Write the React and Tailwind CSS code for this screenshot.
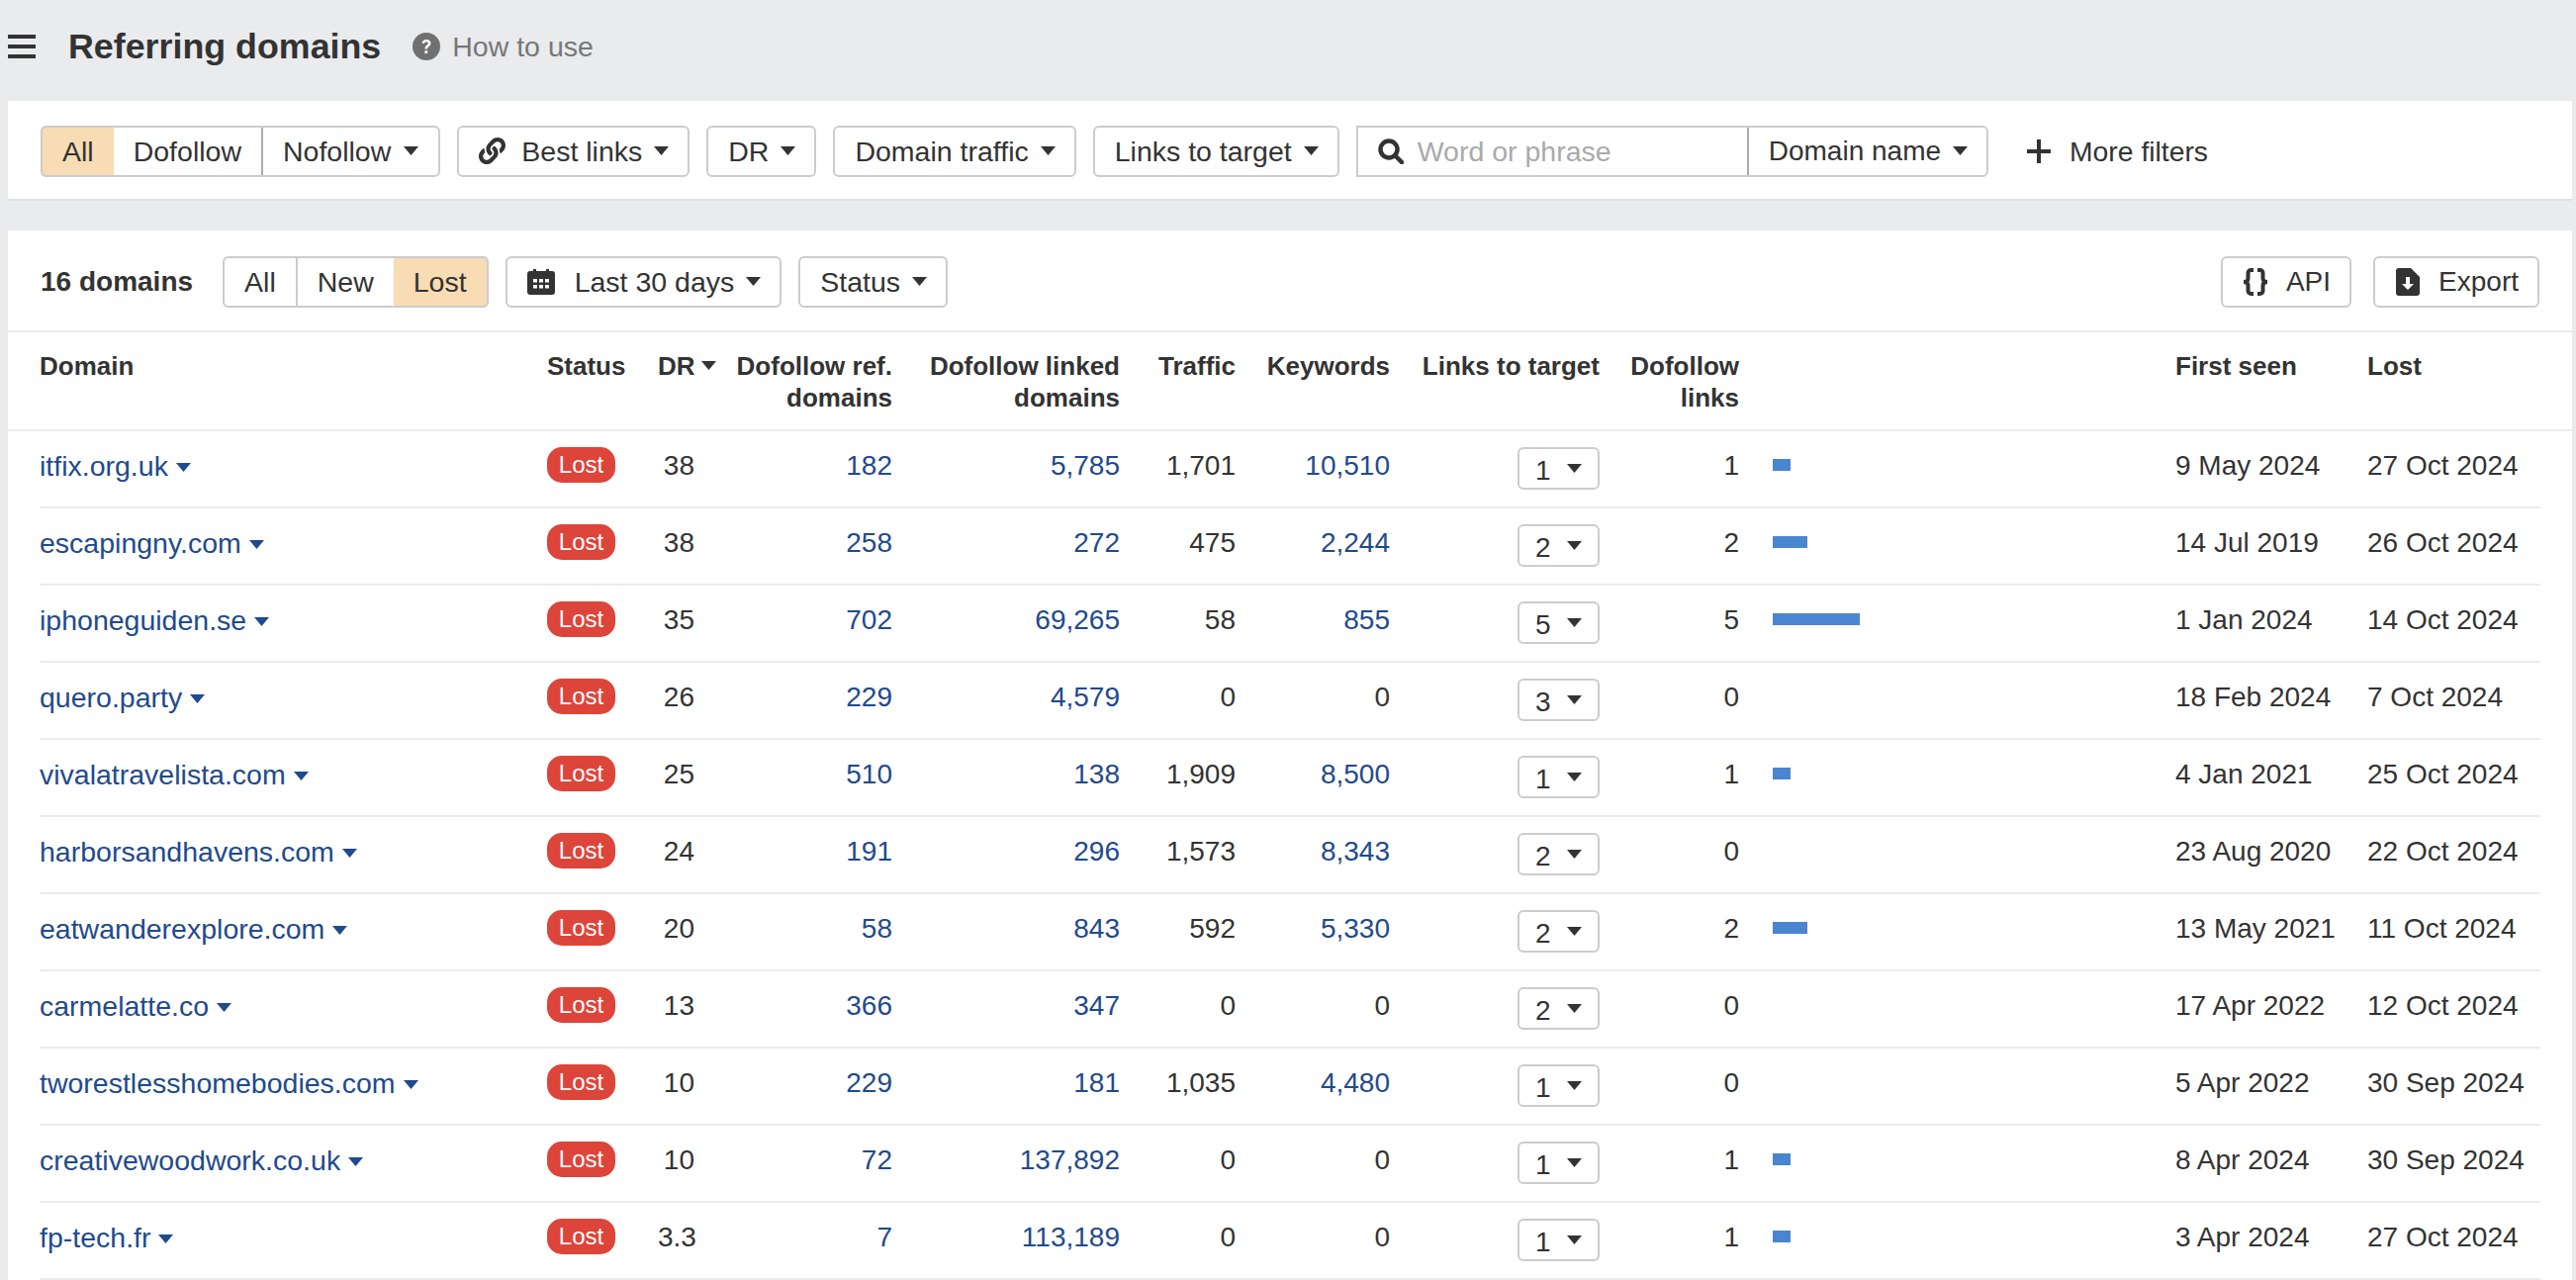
import React from "react";
import { FaLink } from "react-icons/fa";

const rows = [
  { domain: "itfix.org.uk", dr: "38", ref: "182", linked: "5,785", traffic: "1,701", keywords: "10,510", target: 1, links: 1, first: "9 May 2024", lost: "27 Oct 2024" },
  { domain: "escapingny.com", dr: "38", ref: "258", linked: "272", traffic: "475", keywords: "2,244", target: 2, links: 2, first: "14 Jul 2019", lost: "26 Oct 2024" },
  { domain: "iphoneguiden.se", dr: "35", ref: "702", linked: "69,265", traffic: "58", keywords: "855", target: 5, links: 5, first: "1 Jan 2024", lost: "14 Oct 2024" },
  { domain: "quero.party", dr: "26", ref: "229", linked: "4,579", traffic: "0", keywords: "0", target: 3, links: 0, first: "18 Feb 2024", lost: "7 Oct 2024" },
  { domain: "vivalatravelista.com", dr: "25", ref: "510", linked: "138", traffic: "1,909", keywords: "8,500", target: 1, links: 1, first: "4 Jan 2021", lost: "25 Oct 2024" },
  { domain: "harborsandhavens.com", dr: "24", ref: "191", linked: "296", traffic: "1,573", keywords: "8,343", target: 2, links: 0, first: "23 Aug 2020", lost: "22 Oct 2024" },
  { domain: "eatwanderexplore.com", dr: "20", ref: "58", linked: "843", traffic: "592", keywords: "5,330", target: 2, links: 2, first: "13 May 2021", lost: "11 Oct 2024" },
  { domain: "carmelatte.co", dr: "13", ref: "366", linked: "347", traffic: "0", keywords: "0", target: 2, links: 0, first: "17 Apr 2022", lost: "12 Oct 2024" },
  { domain: "tworestlesshomebodies.com", dr: "10", ref: "229", linked: "181", traffic: "1,035", keywords: "4,480", target: 1, links: 0, first: "5 Apr 2022", lost: "30 Sep 2024" },
  { domain: "creativewoodwork.co.uk", dr: "10", ref: "72", linked: "137,892", traffic: "0", keywords: "0", target: 1, links: 1, first: "8 Apr 2024", lost: "30 Sep 2024" },
  { domain: "fp-tech.fr", dr: "3.3", ref: "7", linked: "113,189", traffic: "0", keywords: "0", target: 1, links: 1, first: "3 Apr 2024", lost: "27 Oct 2024" },
];

const cols = "grid grid-cols-[513px_112px_65px_172px_230px_117px_156px_212px_141px_441px_194px_175px]";
const btn = "flex items-center h-[52px] border-2 border-[#ccc] rounded-md bg-white";

function Caret({ className = "text-[#333]" }) {
  return (
    <svg width="15" height="9" viewBox="0 0 15 9" className={className}>
      <path d="M0 0h15L7.5 9z" fill="currentColor" />
    </svg>
  );
}

function Menu({ children, icon, className = "" }) {
  return (
    <div className={`${btn} pl-[20px] pr-[19px] ${className}`}>
      {icon}
      <span>{children}</span>
      <Caret className="ml-[12px] text-[#333]" />
    </div>
  );
}

function Row({ row }) {
  return (
    <div className={`${cols} h-[78px] border-b-2 border-[#ebebeb] pt-[19px]`}>
      <div className="flex items-start text-[#1f4a8e]">
        <span className="text-[28.500px]">{row.domain}</span>
        <Caret className="ml-[8px] mt-[13px] text-[#1f4a8e]" />
      </div>
      <div className="-mt-[3px]">
        <span className="flex items-center justify-center w-[69px] h-[36px] rounded-[15px] bg-[#dd453a] text-white text-[24px]">Lost</span>
      </div>
      <div className="text-right pr-[28px]">{row.dr}</div>
      <div className="text-right text-[#1f4a8e]">{row.ref}</div>
      <div className="text-right text-[#1f4a8e]">{row.linked}</div>
      <div className="text-right">{row.traffic}</div>
      <div className={row.keywords === "0" ? "text-right" : "text-right text-[#1f4a8e]"}>{row.keywords}</div>
      <div className="flex justify-end -mt-[3px]">
        <div className="flex items-center w-[83px] h-[43px] border-2 border-[#ccc] rounded-md pl-[16px] pt-[4px]">
          <span>{row.target}</span>
          <Caret className="ml-[16px] -mt-[4px] text-[#333]" />
        </div>
      </div>
      <div className="text-right">{row.links}</div>
      <div className="pl-[34px] pt-[9px]">
        {row.links > 0 && <div className="h-[12px] bg-[#4a85d0]" style={{ width: row.links * 17.6 }} />}
      </div>
      <div>{row.first}</div>
      <div>{row.lost}</div>
    </div>
  );
}

export default function App() {
  return (
    <div className="h-screen overflow-hidden bg-[#e9ebed] text-[#333] text-[28px] leading-[32px] font-['Liberation_Sans',Arial,sans-serif]">
      <div className="flex items-center h-[102px] pb-[8px] pl-[8px]">
        <svg width="28" height="24" viewBox="0 0 28 24">
          <path d="M0 0h28v4H0zM0 10h28v4H0zM0 20h28v4H0z" fill="#333" />
        </svg>
        <h1 className="ml-[33px] text-[35.800px] font-bold">Referring domains</h1>
        <svg width="28" height="28" viewBox="0 0 28 28" className="ml-[32px]">
          <circle cx="14" cy="14" r="14" fill="#707070" />
          <path d="M9.6 10.6c.3-2.4 2.1-3.6 4.4-3.6 2.600 0 4.500 1.500 4.500 3.800 0 1.800-1 2.700-2.200 3.500-1 .7-1.200 1-1.200 2.100h-2.600c0-2 .5-2.800 1.800-3.700 1-.7 1.500-1.100 1.500-1.900 0-.9-.7-1.500-1.800-1.500-1.200 0-1.800.7-2 1.800zM12.400 18.300h2.800v2.700h-2.800z" fill="#fff" />
        </svg>
        <span className="ml-[12px] text-[28.500px] text-[#777]">How to use</span>
      </div>

      <div className="flex items-center gap-[17px] ml-[8px] mr-[4px] h-[101px] pt-[2px] pl-[33px] bg-white border-b-2 border-[#e0e0e0] text-[28.500px]">
        <div className={btn}>
          <div className="flex items-center h-[52px] -my-[2px] -ml-[2px] px-[20px] bg-[#f8dcb3] border-2 border-[#ccc] border-r-0 rounded-l-md">All</div>
          <div className="px-[20px] border-r-2 border-[#aaa] h-full flex items-center">Dofollow</div>
          <div className="flex items-center pl-[20px] pr-[20px]">
            Nofollow
            <Caret className="ml-[13px] text-[#333]" />
          </div>
        </div>
        <Menu className="pl-[19px]" icon={<FaLink className="mr-[16px] text-[27px] text-[#333]" />}>Best links</Menu>
        <Menu>DR</Menu>
        <Menu>Domain traffic</Menu>
        <Menu>Links to target</Menu>
        <div className={`${btn} rounded-l-none`}>
          <div className="flex items-center w-[395px] h-full pl-[20px] border-r-2 border-[#aaa]">
            <svg width="26" height="26" viewBox="0 0 26 26" className="shrink-0">
              <circle cx="11" cy="11" r="8.500" fill="none" stroke="#333" strokeWidth="4.500" />
              <path d="M17 17l7 7" stroke="#333" strokeWidth="4.500" strokeLinecap="round" />
            </svg>
            <input placeholder="Word or phrase" className="ml-[14px] w-[300px] outline-none placeholder:text-[#aaa]" />
          </div>
          <div className="flex items-center pl-[20px] pr-[19px] text-[28px]">
            Domain name
            <Caret className="ml-[12px] text-[#333]" />
          </div>
        </div>
        <div className="flex items-center ml-[22px]">
          <svg width="24" height="24" viewBox="0 0 24 24">
            <path d="M10 0h4v10h10v4H14v10h-4V14H0v-4h10z" fill="#333" />
          </svg>
          <span className="ml-[19px] text-[28.300px]">More filters</span>
        </div>
      </div>

      <div className="ml-[8px] mr-[4px] mt-[30px] bg-white">
        <div className="flex items-center h-[103px] pt-[2px] pl-[33px] pr-[33px] border-b-2 border-[#ebebeb] text-[28.500px]">
          <span className="text-[28px] font-bold mr-[30px]">16 domains</span>
          <div className={btn}>
            <div className="px-[20px] h-full flex items-center border-r-2 border-[#ccc]">All</div>
            <div className="px-[20px] h-full flex items-center">New</div>
            <div className="flex items-center h-[52px] -my-[2px] -mr-[2px] px-[20px] bg-[#f8dcb3] border-2 border-[#ccc] border-l-0 rounded-r-md">Lost</div>
          </div>
          <Menu
            className="ml-[17px]"
            icon={
              <svg width="28" height="26" viewBox="0 0 28 26" className="mr-[20px]">
                <path d="M6 0h3v2h10V0h3v2h3a3 3 0 0 1 3 3v18a3 3 0 0 1-3 3H3a3 3 0 0 1-3-3V5a3 3 0 0 1 3-3h3z" fill="#333" />
                <path d="M6 10h4v3.500H6zM12 10h4v3.500h-4zM18 10h4v3.500h-4zM6 16h4v3.500H6zM12 16h4v3.500h-4zM18 16h4v3.500h-4z" fill="#fff" />
              </svg>
            }
          >
            Last 30 days
          </Menu>
          <Menu className="ml-[17px]">Status</Menu>
          <div className={`${btn} ml-auto pl-[19px] pr-[19px] text-[28px]`}>
            <svg width="28" height="28" viewBox="0 0 28 28" className="mr-[17px]">
              <path d="M12 2H9.500A3 3 0 0 0 6.500 5v5.500c0 2-1.500 3.500-4.500 3.500 3 0 4.500 1.500 4.500 3.500V23a3 3 0 0 0 3 3H12M16 2h2.500a3 3 0 0 1 3 3v5.500c0 2 1.500 3.500 4.500 3.500-3 0-4.500 1.500-4.500 3.500V23a3 3 0 0 1-3 3H16" fill="none" stroke="#333" strokeWidth="4" />
            </svg>
            API
          </div>
          <div className={`${btn} ml-[22px] pl-[21px] pr-[19px] text-[28px]`}>
            <svg width="24" height="28" viewBox="0 0 24 28" className="mr-[19px]">
              <path d="M3 0h12l9 9v16a3 3 0 0 1-3 3H3a3 3 0 0 1-3-3V3a3 3 0 0 1 3-3z" fill="#333" />
              <path d="M10 9h4v7h4l-6 6-6-6h4z" fill="#fff" />
            </svg>
            Export
          </div>
        </div>

        <div className="border-b-2 border-[#ebebeb] px-[32px]">
          <div className={`${cols} h-[98px] pt-[18px] text-[26px] font-bold`}>
            <div>Domain</div>
            <div>Status</div>
            <div className="flex items-start">
              DR
              <Caret className="ml-[6px] mt-[11px] text-[#333]" />
            </div>
            <div className="text-right">Dofollow ref. domains</div>
            <div className="text-right">Dofollow linked domains</div>
            <div className="text-right">Traffic</div>
            <div className="text-right">Keywords</div>
            <div className="text-right">Links to target</div>
            <div className="text-right pl-[20px]">Dofollow links</div>
            <div />
            <div>First seen</div>
            <div>Lost</div>
          </div>
        </div>

        <div className="px-[32px]">
          {rows.map((row) => (
            <Row key={row.domain} row={row} />
          ))}
        </div>
      </div>
    </div>
  );
}
